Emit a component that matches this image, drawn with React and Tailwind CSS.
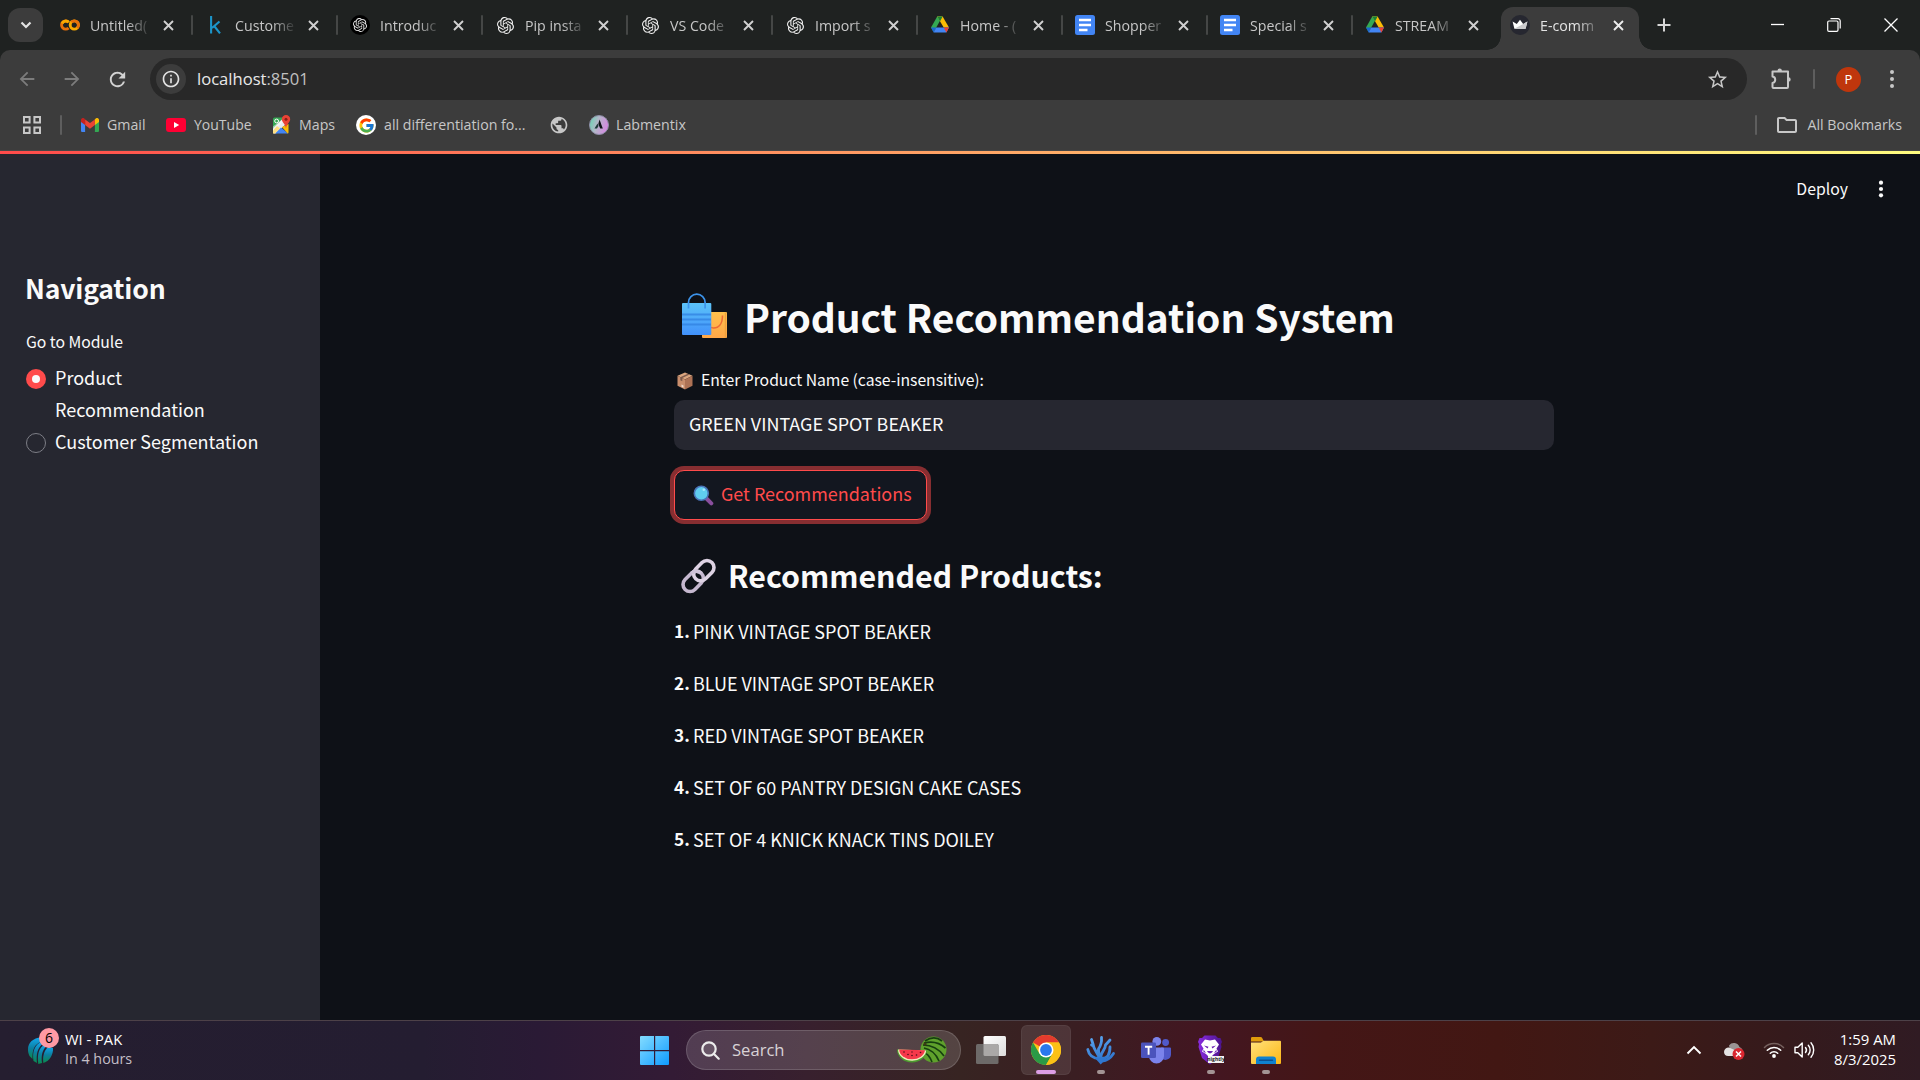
import React from 'react';
import { SiOpenai } from 'react-icons/si';
import { FcGoogle } from 'react-icons/fc';
import { MdArrowBack, MdArrowForward, MdRefresh, MdStarBorder, MdOutlineFolder, MdPublic, MdInfoOutline } from 'react-icons/md';

/* ---------- browser icons ---------- */

const ColabIcon = () => (
  <svg width="20" height="20" viewBox="0 0 20 20" fill="none" strokeWidth="2.9">
    <circle cx="14.3" cy="10" r="4.1" stroke="#f9ab00" />
    <path d="M8.6 7.2a4.1 4.1 0 1 0 0 5.7" stroke="#e8710a" />
    <path d="M8.8 7.3a4.1 4.1 0 0 0-6.7 1.2" stroke="#f9ab00" />
    <path d="M11.4 7.1a4.1 4.1 0 0 1 5.8 5.8" stroke="#e8710a" />
  </svg>
);

const KaggleIcon = () => (
  <svg width="20" height="20" viewBox="0 0 20 20" fill="none" stroke="#1c95c9" strokeWidth="2.1">
    <path d="M6.100 1v17.500M14.500 6.500 7 13M9.200 11 15 18.400" />
  </svg>
);

const DriveIcon = () => (
  <svg width="20" height="20" viewBox="0 0 20 20">
    <path d="M7.2 1.6h5.2L6.2 12.4 3.6 16.9 1 12.4z" fill="#34a853" />
    <path d="M7.2 1.6h5.4l6.4 10.8h-5.3z" fill="#fbbc04" />
    <path d="M7.2 1.6h5.4L10 6.4z" fill="#188038" />
    <path d="M1 12.4h5.2l-2.6 5z" fill="#1967d2" />
    <path d="M6.2 12.4H19l-2.6 5.2H3.6z" fill="#4285f4" />
    <path d="M13.7 12.4H19l-2.6 5z" fill="#ea4335" />
  </svg>
);

const DocsIcon = () => (
  <svg width="20" height="20" viewBox="0 0 20 20">
    <rect width="20" height="20" rx="2.5" fill="#4285f4" />
    <path d="M4 5h12M4 10h12M4 15h8.5" stroke="#fff" strokeWidth="2.3" />
  </svg>
);

const CrownIcon = () => (
  <svg width="20" height="20" viewBox="0 0 20 20">
    <circle cx="10" cy="10" r="10" fill="#262730" />
    <path d="M2.6 6.6 6.8 9l3.2-4.2L13.200 9l4.200-2.400L15.600 13.800H4.400z" fill="#fff" />
    <path d="M17.400 6.600 15.600 13.800H4.400L13.200 9z" fill="#c9c9cc" />
  </svg>
);

const Gpt = () => <SiOpenai size={17} color="#f1f1f1" />;

const GptDark = () => (
  <span className="flex h-5 w-5 items-center justify-center rounded-full bg-black">
    <SiOpenai size={14} color="#e6e6e6" />
  </span>
);

const GmailIcon = () => (
  <svg width="18" height="14" viewBox="0 0 18 14">
    <path d="M0 2.200V12.700C0 13.400.600 14 1.300 14H4.100V5.400z" fill="#4285f4" />
    <path d="M18 2.200V12.700c0 .700-.600 1.300-1.300 1.300h-2.800V5.400z" fill="#34a853" />
    <path d="M13.900 1.400V7L18 4V2c0-1.800-2-2.600-3.300-1.600z" fill="#fbbc04" />
    <path d="M4.100 7V1.400L9 5.100l4.900-3.700V7L9 10.700z" fill="#ea4335" />
    <path d="M0 2v2l4.100 3V1.400L3.300.400C2-.600 0 .200 0 2z" fill="#c5221f" />
  </svg>
);

const YouTubeIcon = () => (
  <svg width="20" height="14" viewBox="0 0 20 14">
    <rect width="20" height="14" rx="3" fill="#ff0033" />
    <path d="M8 4v6l5.200-3z" fill="#fff" />
  </svg>
);

const MapsIcon = () => (
  <svg width="19" height="20" viewBox="0 0 19 20">
    <path d="M1 4a1.500 1.500 0 0 1 1.500-1.500H12L1 14z" fill="#34a853" />
    <path d="M1 18V13.500L10.500 4l3 5.500L4 18.500H2z" fill="#e8eaed" />
    <path d="M1 11.500V16L12 6V3z" fill="#fff" opacity=".5" />
    <path d="M3 18.500 9 12.500l7 6z" fill="#4285f4" />
    <path d="M10 12 16.500 9v8.500a1 1 0 0 1-.800 1z" fill="#fbbc04" />
    <path d="M1 18.500v-3L5 11l3 2.500-5 5z" fill="#ffe082" />
    <circle cx="4.600" cy="6" r="1.900" fill="none" stroke="#fff" strokeWidth="1" />
    <path d="M14 0a4.200 4.200 0 0 1 4.200 4.200c0 3-3.600 4.300-4.200 9.300-.600-5-4.200-6.300-4.200-9.300A4.200 4.200 0 0 1 14 0z" fill="#ea4335" />
    <circle cx="14" cy="4.200" r="1.500" fill="#8c1d18" />
  </svg>
);

const GoogleDisc = () => (
  <span className="flex h-5 w-5 items-center justify-center rounded-full bg-white">
    <FcGoogle size={17} />
  </span>
);

const LabmentixIcon = () => (
  <svg width="20" height="20" viewBox="0 0 20 20">
    <defs>
      <linearGradient id="lab" x1="0" y1="0" x2="1" y2="0.3">
        <stop offset="0" stopColor="#5fd9b0" />
        <stop offset=".5" stopColor="#b5b6c9" />
        <stop offset="1" stopColor="#d38be0" />
      </linearGradient>
    </defs>
    <circle cx="10" cy="10" r="9.500" fill="url(#lab)" stroke="#8f8fa8" strokeWidth="1" />
    <path d="M10.500 4.500 13.800 13.500h-2.600L9.300 9z" fill="#101418" />
    <path d="M5.500 13.500 8.500 8.500l1 2.500-1.500 2.500z" fill="#1c3a38" />
  </svg>
);

const PuzzleIcon = () => (
  <svg width="22" height="24" viewBox="0 0 22 24" fill="none" stroke="#c7c7c7" strokeWidth="2" strokeLinejoin="round">
    <path d="M2.500 4.500H18V20a1 1 0 0 1-1 1H3.500a1 1 0 0 1-1-1V15.900a3.300 3.300 0 0 0 0-6.500z" />
    <path d="M7.500 4.500V3.800a2.200 2.200 0 0 1 4.400 0V4.500zM18 10.200h.500a2.200 2.200 0 0 1 0 4.400H18z" fill="#c7c7c7" stroke="none" />
  </svg>
);

const AppsIcon = () => (
  <svg width="18" height="18" viewBox="0 0 18 18" fill="none" stroke="#c7c7c7" strokeWidth="2">
    <path d="M1 1h5.600v5.600H1zM11.400 1H17v5.600h-5.600zM1 11.400h5.600V17H1zM11.400 11.400H17V17h-5.600z" />
  </svg>
);

const Cross = ({ color = '#d0d0d0' }) => (
  <svg width="11" height="11" viewBox="0 0 11 11" stroke={color} strokeWidth="1.900">
    <path d="M1 1l9 9M10 1l-9 9" />
  </svg>
);

/* ---------- page icons ---------- */

const BagsIcon = () => (
  <svg width="46" height="46" viewBox="0 0 46 46">
    <defs>
      <linearGradient id="bagBlue" x1="0" y1="0" x2="0" y2="1">
        <stop offset="0" stopColor="#5cc3f8" />
        <stop offset="1" stopColor="#4191fb" />
      </linearGradient>
      <linearGradient id="bagGold" x1="0" y1="0" x2="0" y2="1">
        <stop offset="0" stopColor="#ffc14c" />
        <stop offset="1" stopColor="#ffa748" />
      </linearGradient>
    </defs>
    <rect x="20" y="19" width="25" height="26" rx="1" fill="url(#bagGold)" />
    <path d="M43.500 19.500V45" stroke="#f0a13c" strokeWidth="1.500" />
    <path d="M40.500 22.500c0 8-3.500 12.500-9 12.500-1.500 0-3-.600-4-1.500" fill="none" stroke="#ee6b35" strokeWidth="1.600" />
    <rect x="0" y="10" width="29.300" height="32" rx="1" fill="url(#bagBlue)" />
    <path d="M0 21.500h29M0 26.500h29M0 31.500h29" stroke="#2f7fe0" strokeWidth="2" opacity=".7" />
    <path d="M6.500 15.500V9.500a8.300 8.300 0 0 1 16.600 0v6" fill="none" stroke="#3c93ea" strokeWidth="1.700" />
  </svg>
);

const BoxIcon = () => (
  <svg width="16" height="18" viewBox="0 0 16 18">
    <path d="M8 .500 15.500 3.700 8 7.500.500 3.700z" fill="#dba67f" />
    <path d="M.500 3.700 8 7.500v10L.500 13.800z" fill="#c98e6c" />
    <path d="M15.500 3.700 8 7.500v10l7.500-3.700z" fill="#ad7255" />
    <path d="M10.700 1.700 3.300 5.200v3l2 1V6.100l7.300-3.500z" fill="#7d5a4c" />
    <path d="M4.500 12.500l2 1v2.200l-2-1z" fill="#f1dccf" />
  </svg>
);

const LensIcon = () => (
  <svg width="21" height="21" viewBox="0 0 21 21">
    <path d="M13.500 13.500 18.300 18.300" stroke="#8a4f9e" strokeWidth="4" strokeLinecap="round" />
    <circle cx="8.300" cy="8.300" r="7" fill="#60cdf0" stroke="#4a73b8" strokeWidth="1.600" />
    <circle cx="10.800" cy="4.800" r="1.300" fill="#a5e8fb" />
  </svg>
);

const LinkIcon = () => (
  <svg width="35" height="36" viewBox="0 0 35 36" fill="none" strokeWidth="3.600">
    <g transform="rotate(-45 17.500 18)">
      <rect x="-1.500" y="11" width="23" height="14" rx="7" stroke="#c5b8cf" />
      <rect x="13.500" y="11" width="23" height="14" rx="7" stroke="#ddd2e3" />
      <path d="M14.500 11a7 7 0 0 1 7 7" stroke="#cfc3d8" />
    </g>
  </svg>
);

const Dots = ({ color, r, gap }) => (
  <svg width="6" height="22" viewBox="0 0 6 22" fill={color}>
    <circle cx="3" cy={11 - gap} r={r} />
    <circle cx="3" cy="11" r={r} />
    <circle cx="3" cy={11 + gap} r={r} />
  </svg>
);

/* ---------- taskbar icons ---------- */

const CricketIcon = () => (
  <svg width="28" height="28" viewBox="0 0 28 28">
    <defs>
      <linearGradient id="icc" x1="0" y1="0" x2="0" y2="1">
        <stop offset="0" stopColor="#12a8ee" />
        <stop offset=".5" stopColor="#0c7fa0" />
        <stop offset="1" stopColor="#0a8a4c" />
      </linearGradient>
    </defs>
    <path d="M3.500 20C-1 10 5 2 15 1.500V6C9 8 6 13 6.500 23z" fill="url(#icc)" />
    <path d="M7.500 25C6 15 9 9 15 6l2 1.500C11.500 12 10 18 11 27z" fill="url(#icc)" />
    <path d="M12.300 28C11 18 13 12 18.500 8.500l2 1.500c-4 4-5.500 9-4.500 17z" fill="url(#icc)" />
    <path d="M17.300 27c-.800-7 .700-12 5-16.500L27 12c.500 6-3 13-9.700 15z" fill="url(#icc)" />
  </svg>
);

const StartIcon = () => (
  <svg width="29" height="29" viewBox="0 0 29 29">
    <defs>
      <linearGradient id="win" x1="0" y1="0" x2="1" y2="1">
        <stop offset="0" stopColor="#84dcff" />
        <stop offset="1" stopColor="#0f9bff" />
      </linearGradient>
    </defs>
    <path d="M1 0H14V14H0V1a1 1 0 0 1 1-1zM15.200 0H28a1 1 0 0 1 1 1V14H15.200zM0 15.200H14V29H1a1 1 0 0 1-1-1zM15.200 15.200H29V28a1 1 0 0 1-1 1H15.200z" fill="url(#win)" />
  </svg>
);

const MelonIcon = () => (
  <svg width="52" height="28" viewBox="0 0 52 28">
    <circle cx="36.500" cy="13.500" r="13" fill="#5fa12c" />
    <g fill="none" stroke="#173f10" strokeWidth="1.700">
      <path d="M28 5c6-4 12-4 17 0" />
      <path d="M27 7c8-2 16 0 21.500 5" />
      <path d="M26 9c8 0 16 4 21 11" />
      <path d="M27 12c6 1 12 6 15 13" />
      <path d="M26 16c4 1 7 5 9 10" />
    </g>
    <circle cx="28" cy="8" r="1.600" fill="#3b3a14" />
    <path d="M0 13.500 30 14.500A15 12.800 0 0 1 15 26.500 15 13 0 0 1 0 13.500z" fill="#4c9a2f" />
    <path d="M1 13.500 29.200 14.400A14 11.300 0 0 1 15 24.800 14 11.500 0 0 1 1 13.500z" fill="#f3ecc0" />
    <path d="M2.200 13.500 28 14.300A13 10 0 0 1 15 23.300 13 10 0 0 1 2.200 13.500z" fill="#f5394a" />
    <g fill="#4a1018">
      <circle cx="7" cy="16" r=".8" /><circle cx="11" cy="18.500" r=".8" /><circle cx="15" cy="19.500" r=".8" />
      <circle cx="19.500" cy="19" r=".8" /><circle cx="23.500" cy="16.500" r=".8" /><circle cx="15" cy="16" r=".7" />
    </g>
  </svg>
);

const TaskViewIcon = () => (
  <svg width="30" height="28" viewBox="0 0 30 28">
    <defs>
      <linearGradient id="tv" x1="0" y1="0" x2="1" y2="1">
        <stop offset="0" stopColor="#ffffff" />
        <stop offset="1" stopColor="#dcdcdc" />
      </linearGradient>
    </defs>
    <rect x="7.500" y="0" width="22.500" height="20" rx="1.500" fill="url(#tv)" />
    <rect x="0" y="8" width="22.500" height="20" rx="1.500" fill="#6d6a69" />
    <path d="M7.500 8H21a1.500 1.500 0 0 1 1.500 1.500V20H9a1.500 1.500 0 0 1-1.500-1.500z" fill="#aaa8a7" />
  </svg>
);

const ChromeIcon = () => (
  <svg width="30" height="30" viewBox="0 0 30 30">
    <circle cx="15" cy="15" r="15" fill="#fbc116" />
    <path d="M15 15 2 7.500A15 15 0 0 1 28 7.500H15z" fill="#e33b2e" />
    <path d="M2 7.500A15 15 0 0 0 15 30L21.500 18.750 8.500 18.750z" fill="#2b9a46" />
    <path d="M15 7.500H28A15 15 0 0 1 15 30L21.500 18.750z" fill="#fbc116" />
    <circle cx="15" cy="15" r="7.500" fill="#fff" />
    <circle cx="15" cy="15" r="5.900" fill="#2a78ee" />
  </svg>
);

const CoralIcon = () => (
  <svg width="30" height="30" viewBox="0 0 30 30">
    <defs>
      <linearGradient id="coral" gradientUnits="userSpaceOnUse" x1="10" y1="0" x2="18" y2="30">
        <stop offset="0" stopColor="#5aa5ef" />
        <stop offset="1" stopColor="#2a6fc9" />
      </linearGradient>
    </defs>
    <g fill="none" stroke="url(#coral)" strokeLinecap="round" strokeLinejoin="round" strokeWidth="2.800">
      <path d="M15 27V21c0-4 4.500-6 4.500-11l4.500-5" />
      <path d="M13.500 23.500C7 23.500 3 20.500 1.800 14.500" />
      <path d="M13 22C11 17 7.500 14.500 7 9L5.500 4.500M7.500 11 5.500 10" />
      <path d="M12.500 14c2-3 3.500-6 3-11.500M12.500 14c-.500 3 .500 5 2 7" />
      <path d="M16 23.500c5 0 8-4 8-11.500" />
      <path d="M16 26c6-.500 9-3.500 11.500-7.500" />
    </g>
    <path d="M8.500 22.500h12L14.700 29.500z" fill="#2f77d0" />
  </svg>
);

const TeamsIcon = () => (
  <svg width="30" height="27" viewBox="0 0 30 27">
    <circle cx="24.600" cy="5.500" r="3.400" fill="#5059c9" />
    <path d="M20 10.500h9a1 1 0 0 1 1 1v6a5.500 5.500 0 0 1-10 3z" fill="#5059c9" />
    <circle cx="15.800" cy="4.400" r="4.400" fill="#7b83eb" />
    <path d="M9 10.500h13a1 1 0 0 1 1 1V19a7.500 7.500 0 0 1-15 0v-7.500z" fill="#7b83eb" />
    <rect x="0" y="5.500" width="15" height="15.500" rx="1.300" fill="#4b53bc" />
    <path d="M4 9.800h7.200M7.600 9.800v8" stroke="#fff" strokeWidth="1.900" />
  </svg>
);

const BraveIcon = () => (
  <span className="relative h-[30px] w-[28px]">
    <svg width="26" height="30" viewBox="0 0 26 30">
      <defs>
        <linearGradient id="brave" x1="0" y1="0" x2="1" y2="0">
          <stop offset="0" stopColor="#8a2be0" />
          <stop offset="1" stopColor="#4a148c" />
        </linearGradient>
      </defs>
      <path d="M7.500.500h11L21 3h2.500l1.500 4-1 2 .500 3-3.500 11-8 6.500-8-6.500L1.500 12 2 9 1 7l1.500-4H5z" fill="url(#brave)" />
      <path d="M8 4.500 13 5.500l5-1 4 5-2.500 4 1.500 3-4 2.500-4 4-4-4-4-2.500 1.500-3L4 9.500z" fill="#fff" />
      <path d="M7 10.500l4.500 1.300L10.500 13.500zM19 10.500l-4.500 1.300 1 1.700zM10 16h6l-1 1.500-2 1-2-1zM6.500 14.500 9 18l-2.500-1zM19.500 14.500 17 18l2.500-1z" fill="#6a21b4" />
    </svg>
    <span className="absolute left-[11px] top-[21px] flex h-[7px] w-4 items-center justify-center bg-[#f2f2f2] font-['Open_Sans',sans-serif] text-[5px] font-bold leading-none text-[#222]">
      nightly
    </span>
  </span>
);

const ExplorerIcon = () => (
  <svg width="30" height="27" viewBox="0 0 30 27">
    <defs>
      <linearGradient id="fold" x1="0" y1="0" x2="1" y2="1">
        <stop offset="0" stopColor="#ffe17c" />
        <stop offset="1" stopColor="#fcb714" />
      </linearGradient>
    </defs>
    <path d="M0 1.200A1.200 1.200 0 0 1 1.200 0H9.500a2 2 0 0 1 1.400.600L13 4.600H0z" fill="#e09c0b" />
    <path d="M0 5.600H10l2.500-1.800H29a1 1 0 0 1 1 1V26a1 1 0 0 1-1 1H1a1 1 0 0 1-1-1z" fill="url(#fold)" />
    <path d="M5 27v-4.500A3 3 0 0 1 8 19.500H22a3 3 0 0 1 3 3V27z" fill="#1082cf" />
    <path d="M8.500 23.200h13" stroke="#0b5191" strokeWidth="1.400" strokeLinecap="round" />
  </svg>
);

const CloudIcon = () => (
  <svg width="22" height="20" viewBox="0 0 22 20">
    <path d="M5 3.500A6 6 0 0 1 15.500 5 5 5 0 0 1 18 12.500L6 8z" fill="#9a9494" />
    <path d="M0 10a4.500 4.500 0 0 1 5.500-4.300L14 9.500 13 14H4.500A4.300 4.300 0 0 1 0 10z" fill="#e4e2e2" />
    <circle cx="14.500" cy="12" r="6" fill="#d9262f" />
    <path d="M12 9.500l5 5M17 9.500l-5 5" stroke="#fff" strokeWidth="1.500" />
  </svg>
);

const WifiIcon = () => (
  <svg width="22" height="18" viewBox="0 0 22 18" fill="none" strokeWidth="1.500" strokeLinecap="round">
    <path d="M1.500 6.500a13.300 13.300 0 0 1 19 0" stroke="#75605e" />
    <path d="M4.300 9.300a9.500 9.500 0 0 1 13.400 0M7.300 12.200a5.300 5.300 0 0 1 7.400 0" stroke="#fff" />
    <circle cx="11" cy="15" r="1.900" fill="#fff" />
  </svg>
);

const SpeakerIcon = () => (
  <svg width="22" height="18" viewBox="0 0 22 18" fill="none" stroke="#fff" strokeWidth="1.400" strokeLinecap="round" strokeLinejoin="round">
    <path d="M1 6.300h2.800L8.200 2v14l-4.400-4.300H1z" />
    <path d="M11.500 6.500a4 4 0 0 1 0 5M14.300 4.200a7.200 7.200 0 0 1 0 9.600M17 1.800a11 11 0 0 1 0 14.400" />
  </svg>
);

/* ---------- data ---------- */

const tabs = [
  { title: 'Untitled(', Icon: ColabIcon },
  { title: 'Custome', Icon: KaggleIcon },
  { title: 'Introduc', Icon: GptDark },
  { title: 'Pip insta', Icon: Gpt },
  { title: 'VS Code', Icon: Gpt },
  { title: 'Import s', Icon: Gpt },
  { title: 'Home - (', Icon: DriveIcon },
  { title: 'Shopper', Icon: DocsIcon },
  { title: 'Special s', Icon: DocsIcon },
  { title: 'STREAM', Icon: DriveIcon },
  { title: 'E-comm', Icon: CrownIcon, active: true },
];

const products = [
  'PINK VINTAGE SPOT BEAKER',
  'BLUE VINTAGE SPOT BEAKER',
  'RED VINTAGE SPOT BEAKER',
  'SET OF 60 PANTRY DESIGN CAKE CASES',
  'SET OF 4 KNICK KNACK TINS DOILEY',
];

/* ---------- sections ---------- */

function Tab({ title, Icon, active, divider }) {
  return (
    <div className="relative h-[50px] w-[145px] shrink-0">
      {active && (
        <>
          <div className="absolute bottom-0 left-[3px] top-[7px] w-[138px] rounded-t-xl bg-[#3c3c3c]" />
          <div className="absolute bottom-0 left-[-11px] h-[14px] w-[14px] bg-[radial-gradient(circle_at_0_0,transparent_13.5px,#3c3c3c_14px)]" />
          <div className="absolute bottom-0 left-[141px] h-[14px] w-[14px] bg-[radial-gradient(circle_at_100%_0,transparent_13.5px,#3c3c3c_14px)]" />
        </>
      )}
      <div className="relative flex h-full items-center pl-[12px]">
        <span className="flex w-5 shrink-0 justify-center">
          <Icon />
        </span>
        <span
          className={`ml-[10px] mt-px w-[62px] overflow-hidden whitespace-nowrap text-[14.2px] leading-5 [mask-image:linear-gradient(to_right,#000_60%,transparent_100%)] ${
            active ? 'text-[#e3e3e3]' : 'text-[#c7c7c7]'
          }`}
        >
          {title}
        </span>
        <span className="ml-[11px]">
          <Cross color={active ? '#ececec' : '#d0d0d0'} />
        </span>
        {divider && <span className="ml-auto h-5 w-[2px] rounded bg-[#454746]" />}
      </div>
    </div>
  );
}

function TabStrip() {
  return (
    <div className="flex h-[50px] items-center">
      <button className="ml-2 flex h-[34px] w-[35px] shrink-0 items-center justify-center rounded-xl bg-[#3c3c3c]">
        <svg width="12" height="8" viewBox="0 0 12 8" fill="none" stroke="#e3e3e3" strokeWidth="2.200">
          <path d="M1.500 1.500 6 6l4.500-4.500" />
        </svg>
      </button>
      <div className="ml-[5px] flex">
        {tabs.map((t, i) => (
          <Tab key={i} {...t} divider={i < 9} />
        ))}
      </div>
      <svg className="ml-[14px]" width="14" height="14" viewBox="0 0 14 14" stroke="#d6d6d6" strokeWidth="2">
        <path d="M7 .500v13M.500 7h13" />
      </svg>
      <div className="ml-auto mr-[22px] flex items-center gap-[43px]">
        <svg width="13" height="14" viewBox="0 0 13 14" stroke="#fff" strokeWidth="1.300">
          <path d="M0 6.500h13" />
        </svg>
        <svg width="14" height="14" viewBox="0 0 14 14" fill="none" stroke="#fff" strokeWidth="1.200">
          <rect x=".7" y="3" width="10.300" height="10.300" rx="1.300" />
          <path d="M3.500.700H11a2.200 2.200 0 0 1 2.200 2.200V10.500" />
        </svg>
        <svg width="14" height="14" viewBox="0 0 14 14" stroke="#fff" strokeWidth="1.300">
          <path d="M.500.500l13 13M13.500.500l-13 13" />
        </svg>
      </div>
    </div>
  );
}

function Toolbar() {
  return (
    <div className="flex h-[58px] items-center rounded-t-[10px] bg-[#3c3c3c]">
      <MdArrowBack size={22} color="#7c7c7c" className="ml-[16px]" />
      <MdArrowForward size={22} color="#7c7c7c" className="ml-[23px]" />
      <MdRefresh size={23} color="#d2d2d2" className="ml-[23px]" />
      <div className="ml-[21px] flex h-[42px] w-[1597px] items-center rounded-full bg-[#282828] pl-[6px]">
        <span className="flex h-[30px] w-[30px] items-center justify-center rounded-full bg-[#3c3c3c]">
          <MdInfoOutline size={20} color="#e3e3e3" />
        </span>
        <span className="ml-[11px] mt-px text-[16.6px] leading-none text-[#e8e8e8]">
          localhost<span className="text-[#c0c0c0]">:8501</span>
        </span>
        <MdStarBorder size={23} color="#c7c7c7" className="ml-auto mr-[18px]" />
      </div>
      <div className="ml-[23px] flex items-center">
        <PuzzleIcon />
        <span className="ml-[21px] h-5 w-[2px] rounded bg-[#5e5e5e]" />
        <span className="ml-[21px] flex h-[25px] w-[25px] items-center justify-center rounded-full bg-[#bf360c] text-[13px] leading-none text-white">P</span>
      </div>
      <span className="ml-auto mr-[25px]">
        <Dots color="#c7c7c7" r={2} gap={7} />
      </span>
    </div>
  );
}

function Bookmarks() {
  return (
    <div className="flex h-[43px] items-center border-b border-[#474747] bg-[#3c3c3c] pb-[8px] text-[14.2px] leading-5 text-[#c7c7c7]">
      <span className="ml-[23px]"><AppsIcon /></span>
      <span className="ml-[19px] h-5 w-[2px] rounded bg-[#5e5e5e]" />
      <span className="ml-[19px]"><GmailIcon /></span>
      <span className="ml-2 w-[59px]">Gmail</span>
      <YouTubeIcon />
      <span className="ml-2 w-[78px] text-[14px]">YouTube</span>
      <MapsIcon />
      <span className="ml-2 w-[57px]">Maps</span>
      <GoogleDisc />
      <span className="ml-[8px] w-[165px]">all differentiation fo...</span>
      <MdPublic size={20} color="#c7c7c7" />
      <span className="ml-[20px]"><LabmentixIcon /></span>
      <span className="ml-[7px]">Labmentix</span>
      <span className="ml-auto h-5 w-[2px] rounded bg-[#5e5e5e]" />
      <MdOutlineFolder size={24} color="#c7c7c7" className="ml-[18px]" />
      <span className="ml-2 mr-[18px]">All Bookmarks</span>
    </div>
  );
}

function Sidebar() {
  return (
    <aside className="w-[320px] shrink-0 bg-[#262730] px-[26px] pt-[114px] text-[#fafafa]">
      <h2 className="-ml-px h-[40px] text-[26.5px] font-bold leading-[40px] tracking-[-0.15px]">Navigation</h2>
      <p className="mt-[22px] h-[24px] text-[15.76px] leading-[24px] tracking-[-0.05px]">Go to Module</p>
      <ul className="mt-[7px] text-[18px] leading-8">
        <li className="flex">
          <span className="mt-2 flex h-5 w-5 shrink-0 items-center justify-center rounded-full bg-[#ff4b4b]">
            <span className="h-[8px] w-[8px] rounded-full bg-[#fafafa]" />
          </span>
          <span className="ml-[9px] w-[200px]">Product Recommendation</span>
        </li>
        <li className="flex">
          <span className="mt-2 h-5 w-5 shrink-0 rounded-full border border-[#7d7e86]" />
          <span className="ml-[9px] whitespace-nowrap">Customer Segmentation</span>
        </li>
      </ul>
    </aside>
  );
}

function Main() {
  return (
    <main className="relative flex flex-1 justify-center bg-[#0e1117] pr-[12px] text-[#fafafa]">
      <div className="absolute right-[36px] top-[23px] flex h-6 items-center">
        <span className="text-[15.8px] leading-6">Deploy</span>
        <span className="ml-[30px]"><Dots color="#fafafa" r={2.1} gap={6.3} /></span>
      </div>
      <section className="w-[880px] pt-[132px]">
        <h1 className="flex h-[60px] items-center text-[38.95px] font-bold leading-[60px]">
          <span className="ml-2"><BagsIcon /></span>
          <span className="ml-[16px] tracking-[-0.03px]">Product Recommendation System</span>
        </h1>
        <label className="mt-[22px] flex h-6 items-center text-[15.76px] leading-6">
          <span className="ml-[3px] mt-[2px]"><BoxIcon /></span>
          <span className="ml-[8px] tracking-[-0.03px]">Enter Product Name (case-insensitive):</span>
        </label>
        <div className="mt-[8px] h-[50px] rounded-[10px] bg-[#262730] pl-[15px] text-[17.95px] leading-[46px]">
          GREEN VINTAGE SPOT BEAKER
        </div>
        <button className="mt-5 flex h-[50px] w-[253px] items-center rounded-[10px] border border-[#ff4b4b] bg-[#131720] pl-[18px] text-[17.95px] text-[#ff4b4b] shadow-[0_0_0_4px_rgba(255,75,75,0.5)]">
          <LensIcon />
          <span className="-mt-[3px] ml-[7px] leading-none">Get Recommendations</span>
        </button>
        <h2 className="mt-[35px] flex h-[40px] items-center text-[30.37px] font-bold leading-[40px]">
          <span className="ml-[7px] mt-[2px]"><LinkIcon /></span>
          <span className="ml-[12px] tracking-[-0.03px]">Recommended Products:</span>
        </h2>
        <ol className="mt-[20px] flex flex-col gap-5 text-[18px] leading-8">
          {products.map((p, i) => (
            <li key={p} className="flex whitespace-nowrap">
              <b className="w-[19px] text-[17.2px]">{i + 1}.</b>
              <span className="tracking-[-0.03px]">{p}</span>
            </li>
          ))}
        </ol>
      </section>
    </main>
  );
}

function TaskApp({ children, active, running }) {
  return (
    <div className={`relative flex h-[50px] w-[50px] items-center justify-center rounded-md ${active ? 'border border-white/5 bg-white/10' : ''}`}>
      {children}
      {active && <span className="absolute bottom-0 h-1 w-5 rounded-full bg-[#dc9fe6]" />}
      {running && <span className="absolute bottom-[1px] h-1 w-2 rounded-full bg-[#a39494]" />}
    </div>
  );
}

function Taskbar() {
  return (
    <footer className="flex h-[60px] items-center border-t border-[#4d4148] bg-[linear-gradient(90deg,#251e30_0%,#241d31_22%,#2a1a35_28%,#331b35_35%,#38202e_42%,#372422_50%,#3a1e22_56%,#431621_63%,#441616_69%,#421713_78%,#3c1a17_86%,#351a1c_93%,#301b23_100%)] pb-px text-white">
      <div className="flex w-[640px] items-center">
        <span className="relative ml-[26px] mt-[-1px]">
          <CricketIcon />
          <span className="absolute left-[13px] top-[-8px] flex h-5 w-5 items-center justify-center rounded-full bg-[#ff99a4] text-[14px] leading-none text-black">6</span>
        </span>
        <div className="ml-[11px] mt-[-2px] text-[14.7px] leading-5">
          <div>WI - PAK</div>
          <div className="text-[14.3px] text-[#c4bfc7]">In 4 hours</div>
        </div>
      </div>
      <StartIcon />
      <div className="ml-[17px] flex h-[40px] w-[275px] items-center rounded-full border border-white/15 bg-white/15 pl-[14px]">
        <svg width="19" height="19" viewBox="0 0 19 19" fill="none" stroke="#ececec" strokeWidth="2.200" strokeLinecap="round">
          <circle cx="8" cy="8" r="6.700" fill="rgba(255,255,255,.12)" />
          <path d="M13 13l4.700 4.700" />
        </svg>
        <span className="ml-[12px] mt-px text-[16.6px] leading-none text-[#d8d2d6]">Search</span>
        <span className="ml-auto mr-[11px]"><MelonIcon /></span>
      </div>
      <div className="ml-[5px] flex gap-[5px]">
        <TaskApp><TaskViewIcon /></TaskApp>
        <TaskApp active><ChromeIcon /></TaskApp>
        <TaskApp running><CoralIcon /></TaskApp>
        <TaskApp><TeamsIcon /></TaskApp>
        <TaskApp running><BraveIcon /></TaskApp>
        <TaskApp running><ExplorerIcon /></TaskApp>
      </div>
      <div className="ml-auto mr-[24px] flex items-center">
        <svg width="16" height="10" viewBox="0 0 16 10" fill="none" stroke="#fff" strokeWidth="1.900">
          <path d="M1.500 8.500 8 2l6.500 6.500" />
        </svg>
        <span className="ml-[22px] mt-[3px]"><CloudIcon /></span>
        <span className="ml-[17px]"><WifiIcon /></span>
        <span className="ml-[9px]"><SpeakerIcon /></span>
        <div className="ml-[17px] mt-[-2px] w-[63px] whitespace-nowrap text-right text-[14.9px] leading-5">
          <div>1:59 AM</div>
          <div>8/3/2025</div>
        </div>
      </div>
    </footer>
  );
}

export default function App() {
  return (
    <div className="flex h-[1080px] w-[1920px] flex-col overflow-hidden bg-[#1f2221] font-['Open_Sans','Noto_Sans',sans-serif]">
      <TabStrip />
      <Toolbar />
      <Bookmarks />
      <div className="h-[3px] shrink-0 bg-[linear-gradient(90deg,#ff4b4b,#fffd80)]" />
      <div className="flex flex-1 font-['Noto_Sans_CJK_SC',sans-serif]">
        <Sidebar />
        <Main />
      </div>
      <Taskbar />
    </div>
  );
}
